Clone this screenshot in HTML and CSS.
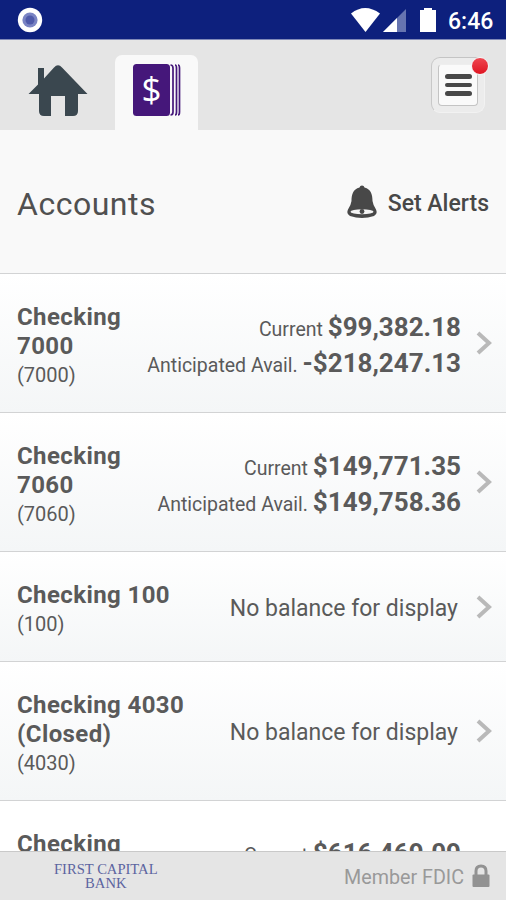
FILE: index.html
```html
<!DOCTYPE html>
<html lang="en">
<head>
    <meta charset="UTF-8">
    <meta name="viewport" content="width=device-width, initial-scale=1.0">
    <title>Accounts</title>
    <link rel="stylesheet" href="styles.css">
</head>
<body>

<!-- Status bar -->
<div class="status-bar">
    <svg class="record-icon" width="26" height="26" viewBox="0 0 26 26">
        <circle cx="13" cy="13" r="12.2" fill="#fff"/>
        <circle cx="13" cy="13" r="7.6" fill="#7a84c4"/>
        <circle cx="13" cy="13" r="4.5" fill="#4f5aaa"/>
    </svg>
    <svg class="status-icons" width="88" height="26" viewBox="0 0 88 26">
        <path d="M1 6.5Q15 -4.5 30 6.5L15.5 25Z" fill="#fff"/>
        <path d="M56 2V25H33Z" fill="#6674b0"/>
        <path d="M47 11V25H33Z" fill="#fff"/>
        <path d="M70 3H74V1H82V3H86V25H70Z" fill="#fff"/>
    </svg>
    <span class="clock">6:46</span>
</div>

<!-- Tabs -->
<div class="tabs">
    <div class="tab">
        <svg width="60" height="53" viewBox="0 0 60 53">
            <path d="M0.5 30L10 20.500V4H16V14.500L26 3.500Q30 -1 34 3.500L59.500 30H50V47Q50 52 45 52H37V32H23V52H16Q11 52 11 47V30Z" fill="#3a474f"/>
        </svg>
    </div>
    <div class="tab active">
        <svg width="50" height="54" viewBox="0 0 50 54">
            <rect x="1" y="1" width="37" height="52" rx="3.500" fill="#45177a"/>
            <path d="M38.500 2Q41 2 41 5V49Q41 52 38.500 52M43 2Q44.500 2 44.500 5V49Q44.500 52 43 52M46 2Q47.500 2 47.500 5V49Q47.500 52 46 52" fill="none" stroke="#45177a" stroke-width="1.700"/>
            <text class="dollar" x="19.500" y="39" text-anchor="middle">$</text>
        </svg>
    </div>
    <div class="menu">
        <div class="menu-button">
            <span></span>
            <span></span>
            <span></span>
        </div>
        <div class="badge"></div>
    </div>
</div>

<!-- Page heading -->
<div class="heading">
    <div class="title">Accounts</div>
    <div class="set-alerts">
        <svg width="32" height="34" viewBox="0 0 32 34">
            <path d="M16 0.500Q18 0.500 18.500 2.500C25 4 26.500 10 26.500 16Q27 20 30 24.500Q32 29 28 31Q16 35 4 31Q0 29 2 24.500Q5 20 5.500 16C5.500 10 7 4 13.500 2.500Q14 0.500 16 0.500Z" fill="#484848"/>
            <ellipse cx="16" cy="26.800" rx="11.500" ry="2.500" fill="#f4f4f4"/>
            <circle cx="16" cy="26.500" r="2.400" fill="#484848"/>
        </svg>
        <span>Set Alerts</span>
    </div>
</div>

<!-- Account list -->
<div class="accounts">
    <div class="account">
        <div class="name">
            <div class="label">Checking<br>7000</div>
            <div class="number">(7000)</div>
        </div>
        <div class="balances">
            <div class="balance">Current <b>$99,382.18</b></div>
            <div class="balance">Anticipated Avail. <b>-$218,247.13</b></div>
        </div>
        <svg class="chevron" width="16" height="24" viewBox="0 0 16 24"><path d="M2 2L13 12L2 22"/></svg>
    </div>
    <div class="account">
        <div class="name">
            <div class="label">Checking<br>7060</div>
            <div class="number">(7060)</div>
        </div>
        <div class="balances">
            <div class="balance">Current <b>$149,771.35</b></div>
            <div class="balance">Anticipated Avail. <b>$149,758.36</b></div>
        </div>
        <svg class="chevron" width="16" height="24" viewBox="0 0 16 24"><path d="M2 2L13 12L2 22"/></svg>
    </div>
    <div class="account">
        <div class="name">
            <div class="label">Checking 100</div>
            <div class="number">(100)</div>
        </div>
        <div class="no-balance">No balance for display</div>
        <svg class="chevron" width="16" height="24" viewBox="0 0 16 24"><path d="M2 2L13 12L2 22"/></svg>
    </div>
    <div class="account">
        <div class="name">
            <div class="label">Checking 4030<br>(Closed)</div>
            <div class="number">(4030)</div>
        </div>
        <div class="no-balance">No balance for display</div>
        <svg class="chevron" width="16" height="24" viewBox="0 0 16 24"><path d="M2 2L13 12L2 22"/></svg>
    </div>
    <div class="account">
        <div class="name">
            <div class="label">Checking</div>
        </div>
        <div class="balances">
            <div class="balance">Current <b>$616,469.09</b></div>
        </div>
    </div>
</div>

<!-- Footer -->
<div class="footer">
    <div class="bank">FIRST CAPITAL<br>BANK</div>
    <div class="fdic">
        <span>Member FDIC</span>
        <svg width="18" height="24" viewBox="0 0 18 24">
            <path d="M4 12V7Q4 2 9 2Q14 2 14 7V12" fill="none" stroke="#929292" stroke-width="3"/>
            <rect x="0.500" y="10.500" width="17" height="12.500" rx="1" fill="#929292"/>
        </svg>
    </div>
</div>

</body>
</html>
```
FILE: styles.css
```css
body {
    font-family: Roboto, sans-serif;
    margin: 0;
    height: 900px;
    display: flex;
    flex-direction: column;
    overflow: hidden;
    background-color: #f9f9f9;
    color: #5a5a5a;
}

svg {
    display: block;
    flex: none;
}

/* Status bar */
.status-bar {
    height: 40px;
    flex: none;
    box-sizing: border-box;
    padding: 0 13px 0 17px;
    display: flex;
    align-items: center;
    background-color: #0d207d;
    border-bottom: 1px solid #8089b8;
}

.status-icons {
    margin-left: auto;
    margin-right: 10px;
}

.clock {
    width: 45px;
    color: #fff;
    font-size: 23px;
    font-weight: 500;
    line-height: 26px;
    padding-top: 4px;
}

/* Tabs */
.tabs {
    height: 90px;
    flex: none;
    display: flex;
    align-items: flex-end;
    background-color: #e5e5e5;
}

.tab {
    width: 115px;
    height: 75px;
    display: flex;
    justify-content: center;
    box-sizing: border-box;
    padding-top: 9px;
}

.tab.active {
    width: 83px;
    padding-top: 8px;
    background-color: #f9f9f9;
    border-radius: 7px 7px 0 0;
}

.dollar {
    font-family: "Open Sans", sans-serif;
    font-size: 35px;
    fill: #fff;
}

.menu {
    position: relative;
    width: 54px;
    height: 56px;
    box-sizing: border-box;
    margin: 0 21px 17px auto;
    padding: 6px;
    border: 1px solid #f2f2f2;
    border-top-color: #c4c4c4;
    border-left-color: #c8c8c8;
    border-radius: 9px;
    background-color: #ececec;
}

.menu-button {
    height: 42px;
    box-sizing: border-box;
    border: 1px solid #c4c4c4;
    border-top-color: #eee;
    border-radius: 4px;
    background-color: #fafafa;
    display: flex;
    flex-direction: column;
    align-items: center;
    justify-content: center;
    gap: 4px;
}

.menu-button span {
    width: 27px;
    height: 4.500px;
    border-radius: 3px;
    background-color: #484848;
}

.badge {
    position: absolute;
    top: -1px;
    right: -5px;
    width: 16px;
    height: 16px;
    border: 1px solid #f5f5f5;
    border-radius: 50%;
    background: linear-gradient(#ef4650, #df1522);
}

/* Heading */
.heading {
    height: 143px;
    flex: none;
    display: flex;
    align-items: center;
    justify-content: space-between;
    padding: 0 17px;
    border-bottom: 1px solid #d2d3d4;
}

.title {
    font-size: 32px;
    letter-spacing: 0.500px;
    padding-top: 4px;
    color: #505050;
}

.set-alerts {
    display: flex;
    align-items: center;
    gap: 10px;
    font-size: 23px;
    font-weight: 500;
    color: #484848;
}

.set-alerts span {
    padding-top: 4px;
}

/* Accounts */
.accounts {
    flex: 1;
    min-height: 0;
    overflow: hidden;
}

.account {
    display: flex;
    align-items: center;
    padding: 0 14px 0 17px;
    border-bottom: 1px solid #d2d3d4;
    background: linear-gradient(#fff, #f4f6f7);
}

.account:last-child {
    height: 138px;
    align-items: flex-start;
    background: #fff;
}

.name {
    padding: 29px 0 22px;
    white-space: nowrap;
}

.label {
    font-size: 24px;
    font-weight: 700;
    line-height: 29px;
    letter-spacing: 0.400px;
}

.number {
    font-size: 20px;
    line-height: 29px;
}

.balances {
    margin-left: auto;
    margin-right: 15px;
    padding-top: 4px;
    text-align: right;
    white-space: nowrap;
}

.balance {
    height: 36px;
    font-size: 19.500px;
    line-height: 36px;
}

.balance b {
    font-size: 26px;
}

.account:last-child .balances {
    padding-top: 34px;
    margin-right: 31px;
}

.no-balance {
    margin-left: auto;
    margin-right: 18px;
    padding-top: 3px;
    font-size: 23px;
}

.chevron path {
    fill: none;
    stroke: #b9b9b9;
    stroke-width: 4;
}

/* Footer */
.footer {
    height: 48px;
    flex: none;
    display: flex;
    align-items: center;
    justify-content: space-between;
    padding: 0 16px 0 54px;
    border-top: 1px solid #c9c9c9;
    background-color: #e5e5e5;
}

.bank {
    font-family: "Liberation Serif", serif;
    font-size: 14.600px;
    line-height: 14px;
    text-align: center;
    color: #5c64a0;
}

.fdic {
    display: flex;
    align-items: center;
    gap: 8px;
    font-size: 19.700px;
    color: #999;
}

.fdic span {
    padding-top: 2px;
}
```
